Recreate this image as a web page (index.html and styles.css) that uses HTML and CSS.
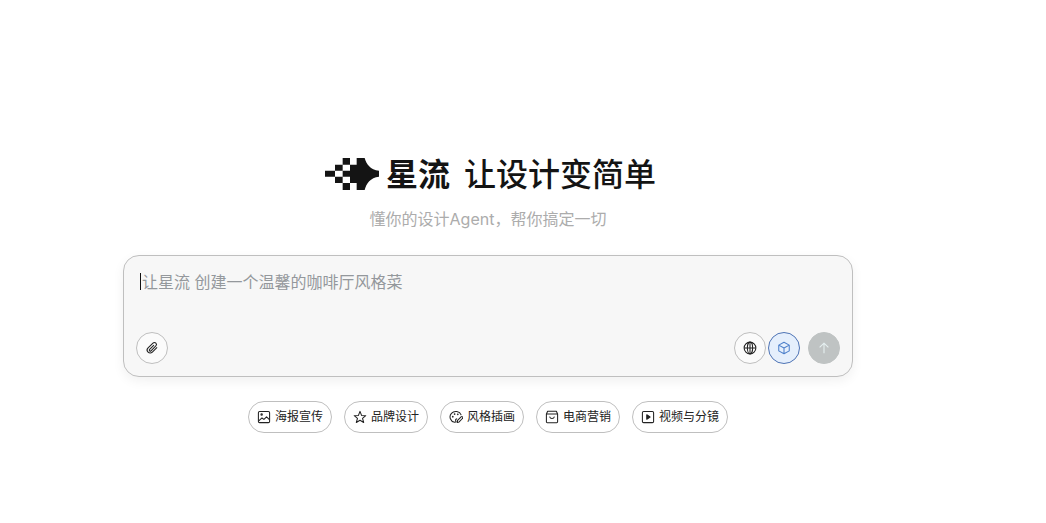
FILE: index.html
```html
<!DOCTYPE html>
<html lang="zh-CN">
  <head>
    <meta charset="UTF-8" />
    <meta name="viewport" content="width=device-width, initial-scale=1.0" />
    <title>星流</title>
    <link rel="stylesheet" href="styles.css">
  </head>

  <body>
    <div class="container">
      <h1>
        <svg class="logo" viewBox="0 0 162 96" fill="currentColor">
          <path d="M0 38h30v18H0zM30 20h23v18H30zM30 56h23v19H30zM53 0h22v20H53zM53 38h22v18H53zM53 75h22v21H53z" />
          <path d="M95 0h24c5 18 17 36 43 38v18c-26 3-38 20-43 40H95V75H75V20h20z" />
        </svg>
        <span class="brand">星流</span>
        <span class="slogan">让设计变简单</span>
      </h1>
      <p class="subtitle">懂你的设计Agent，帮你搞定一切</p>

      <div class="prompt-box">
        <div class="prompt-text"><span class="caret"></span>让星流 创建一个温馨的咖啡厅风格菜</div>
        <div class="toolbar">
          <button class="round-btn" aria-label="附件">
            <svg class="icon" viewBox="0 0 16 16">
              <path d="M13.8 7.4 8.4 12.8a3.4 3.4 0 0 1-4.9-4.9l5.6-5.5a2.3 2.3 0 0 1 3.3 3.3l-5.5 5.5a1.1 1.1 0 0 1-1.6-1.6l4.9-4.9" />
            </svg>
          </button>
          <div class="actions">
            <button class="round-btn" aria-label="联网">
              <svg class="icon" viewBox="0 0 16 16">
                <circle cx="8" cy="8" r="6.7" />
                <ellipse cx="8" cy="8" rx="3" ry="6.7" />
                <path d="M1.3 8h13.4M8 1.3v13.4" />
              </svg>
            </button>
            <button class="round-btn active" aria-label="模型">
              <svg class="icon" viewBox="0 0 16 16">
                <path d="M8 1.4 14 4.7v6.6L8 14.6 2 11.3V4.7zM2 4.7 8 8l6-3.3M8 8v6.6" />
              </svg>
            </button>
            <button class="round-btn send" aria-label="发送">
              <svg class="icon" viewBox="0 0 16 16">
                <path d="M8 14V2.5M3 7.4l5-5 5 5" />
              </svg>
            </button>
          </div>
        </div>
      </div>

      <div class="tags">
        <button class="tag">
          <svg class="icon" viewBox="0 0 16 16">
            <rect x="1.6" y="1.6" width="12.8" height="12.8" rx="1.4" />
            <path d="m2 12.5 3.7-3.4 2.2 1.7 3-2.9 3.3 3.2" />
            <circle cx="5.3" cy="5.2" r=".8" />
          </svg>
          <span>海报宣传</span>
        </button>
        <button class="tag">
          <svg class="icon" viewBox="0 0 16 16">
            <path d="m8 1.6 1.8 4.6 4.8.3-3.7 3.1 1.300 4.700L8 11.700l-4.200 2.600 1.300-4.700-3.700-3.100 4.800-.3z" />
          </svg>
          <span>品牌设计</span>
        </button>
        <button class="tag">
          <svg class="icon" viewBox="0 0 16 16">
            <path d="M14 5.800A6.600 6.200 0 1 0 6.500 14c1.500.1 1.700-.8 1.200-1.800-.5-1.200.3-2.100 1.600-2.200" />
            <path d="m9.300 14.300.5-2.500 4-4a1.200 1.200 0 0 1 1.500 1.900l-3.700 3.900z" />
            <circle class="solid" cx="4.300" cy="7.600" r=".4" />
            <circle class="solid" cx="6.400" cy="4.700" r=".4" />
            <circle class="solid" cx="10" cy="4.900" r=".4" />
          </svg>
          <span>风格插画</span>
        </button>
        <button class="tag">
          <svg class="icon" viewBox="0 0 16 16">
            <path d="M3 1.500h10l1.400 3v9a1 1 0 0 1-1 1H2.600a1 1 0 0 1-1-1v-9zM1.600 4.500h12.800M5.200 7.500c1 2.900 4.600 2.900 5.600 0" />
          </svg>
          <span>电商营销</span>
        </button>
        <button class="tag">
          <svg class="icon" viewBox="0 0 16 16">
            <rect x="1.600" y="1.600" width="12.800" height="12.800" rx="1.400" />
            <path class="solid" d="M6.600 5.500v5l3.800-2.500z" />
          </svg>
          <span>视频与分镜</span>
        </button>
      </div>
    </div>
  </body>
</html>
```

FILE: styles.css
```css
* {
  box-sizing: border-box;
}

body {
  margin: 0;
  background-color: #fff;
  font-family: Inter, "Noto Sans CJK SC", sans-serif;
}

.container {
  width: 730px;
  margin-left: 123px;
  padding-top: 152px;
}

h1 {
  display: flex;
  align-items: center;
  height: 44px;
  margin: 0;
  padding-left: 202px;
  color: #141414;
  font-size: 32px;
  line-height: 44px;
  white-space: nowrap;
}

.logo {
  width: 54px;
  height: 32px;
  margin-right: 7px;
}

.brand {
  font-weight: 700;
  margin-right: 14px;
}

.slogan {
  font-weight: 500;
}

.brand,
.slogan {
  padding-top: 1px;
}

.subtitle {
  margin: 12px 0 0;
  color: #acacac;
  font-size: 16px;
  font-weight: 400;
  line-height: 22px;
  text-align: center;
}

.prompt-box {
  display: flex;
  flex-direction: column;
  justify-content: space-between;
  height: 122px;
  margin-top: 25px;
  padding: 14px 12px 12px;
  border: 1px solid #bfbfbf;
  border-radius: 16px;
  background-color: #f7f7f7;
  box-shadow: 0 4px 12px rgba(0, 0, 0, 0.06);
}

.prompt-text {
  display: flex;
  align-items: center;
  height: 22px;
  padding-left: 4px;
  color: #94989c;
  font-size: 16px;
  font-weight: 400;
  white-space: pre;
}

.caret {
  width: 1px;
  height: 17px;
  margin-right: 1px;
  background-color: #111;
}

.toolbar,
.actions {
  display: flex;
  align-items: center;
}

.toolbar {
  justify-content: space-between;
}

.icon {
  width: 14px;
  height: 14px;
  fill: none;
  stroke: currentColor;
  stroke-width: 1.2;
  stroke-linejoin: round;
}

.icon .solid {
  fill: currentColor;
}

.round-btn {
  display: flex;
  align-items: center;
  justify-content: center;
  width: 32px;
  height: 32px;
  margin: 0;
  padding: 0;
  border: 1px solid #bfbfbf;
  border-radius: 50%;
  background-color: #fbfbfb;
  color: #222;
}

.active {
  margin-left: 2px;
  border-color: #4f74b5;
  background-color: #e5effc;
  color: #4c7fca;
}

.send {
  margin-left: 8px;
  border-color: #bfc3c3;
  background-color: #bfc3c3;
  color: #e6f1f2;
}

.tags {
  display: flex;
  justify-content: center;
  gap: 12px;
  margin-top: 24px;
}

.tag {
  display: flex;
  align-items: center;
  gap: 4px;
  height: 32px;
  padding: 0 8px;
  border: 1px solid #bfbfbf;
  border-radius: 16px;
  background-color: #fff;
  color: #222;
  font-family: inherit;
  font-size: 12px;
  line-height: 18px;
}

.tag span {
  padding-bottom: 1px;
}
```
